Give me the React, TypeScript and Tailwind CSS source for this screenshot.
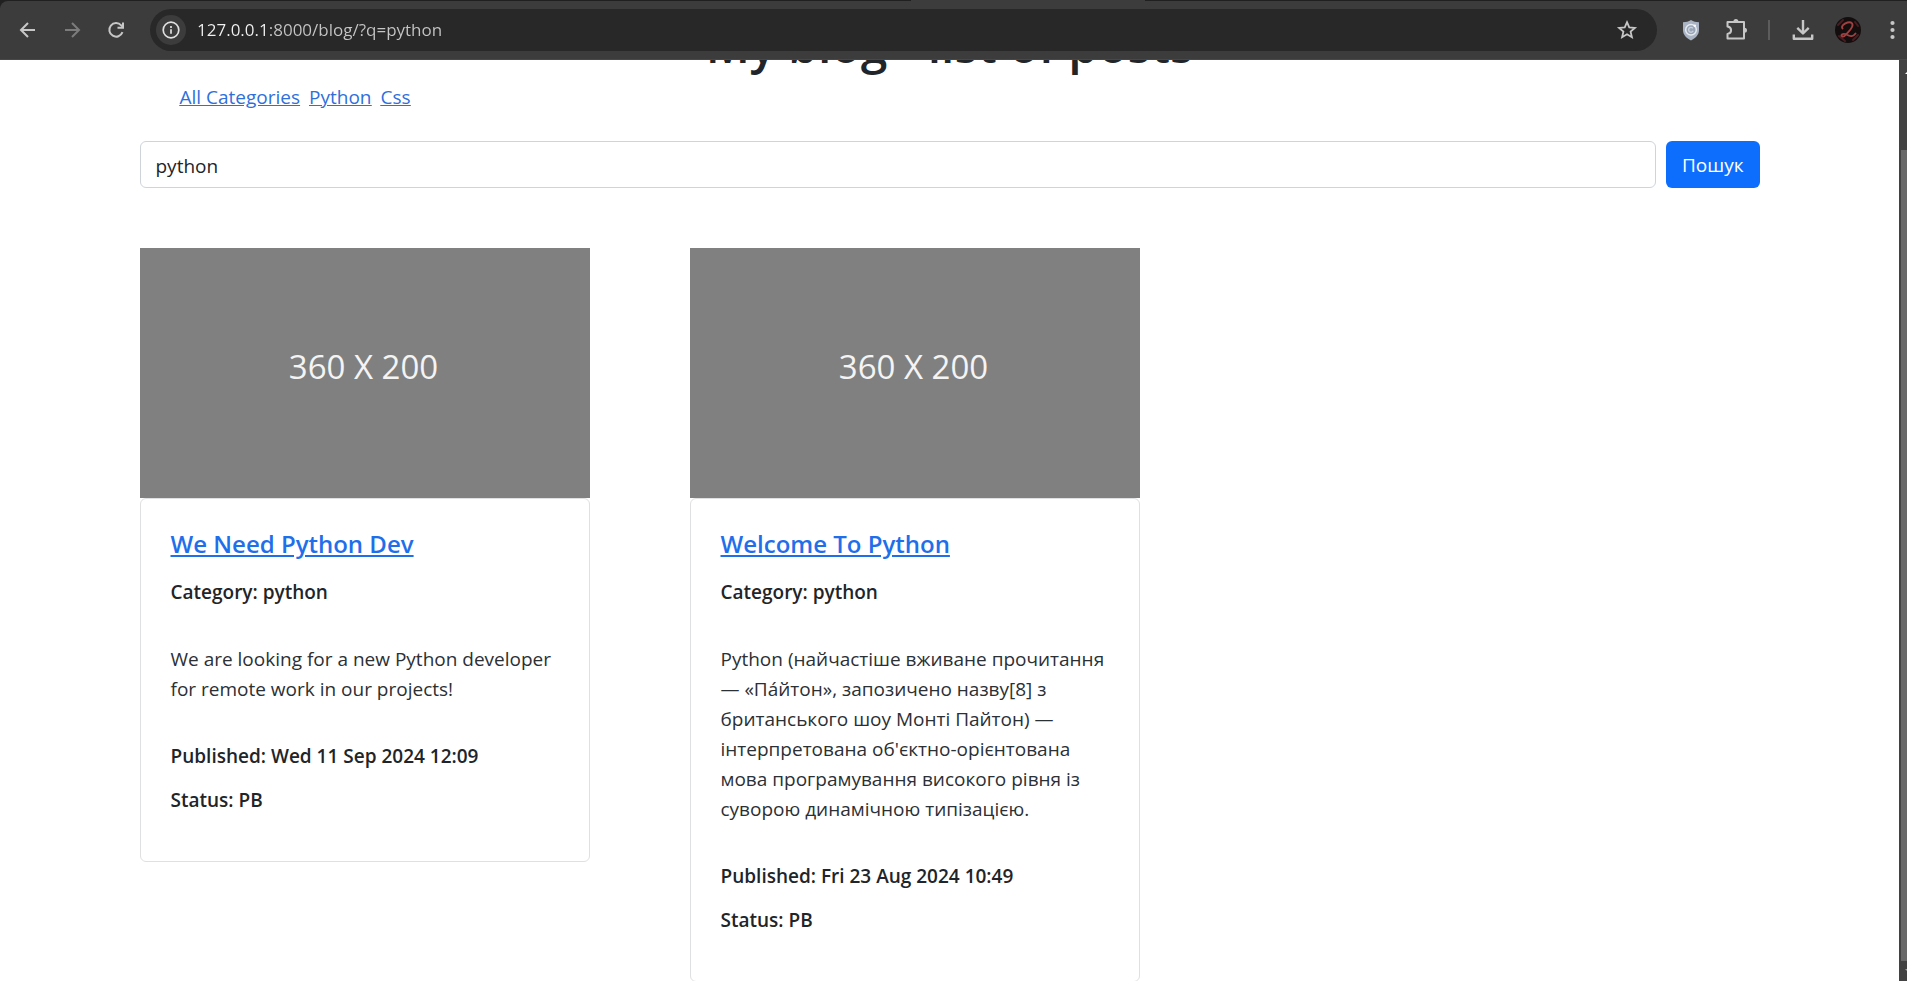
import React from "react";

type Post = {
  title: string;
  category: string;
  body: string;
  published: string;
  status: string;
};

const posts: Post[] = [
  {
    title: "We Need Python Dev",
    category: "python",
    body: "We are looking for a new Python developer for remote work in our projects!",
    published: "Wed 11 Sep 2024 12:09",
    status: "PB",
  },
  {
    title: "Welcome To Python",
    category: "python",
    body: "Python (найчастіше вживане прочитання — «Па́йтон», запозичено назву[8] з британського шоу Монті Пайтон) — інтерпретована об'єктно-орієнтована мова програмування високого рівня із суворою динамічною типізацією.",
    published: "Fri 23 Aug 2024 10:49",
    status: "PB",
  },
];

function ToolButton({ label, children }: { label: string; children: React.ReactNode }) {
  return (
    <button type="button" aria-label={label} className="flex size-6 shrink-0 items-center justify-center">
      {children}
    </button>
  );
}

function Toolbar() {
  return (
    <header className="relative z-10 flex h-[60px] shrink-0 flex-col bg-[#202020]">
      <div className="flex h-px justify-center pl-[148px]">
        <div className="w-[234px] bg-[#3c3c3c]" />
      </div>
      <div className="flex flex-1 items-center rounded-tl-lg border-b border-[#484848] bg-[#3c3c3c] pr-0.5 pl-4 text-[#c7c7c7]">
        <nav aria-label="History" className="flex gap-5">
          <ToolButton label="Back">
            <svg viewBox="0 0 24 24" className="size-6" fill="none" stroke="currentColor" strokeWidth="2">
              <path d="M19 12H5.500M12 5l-7 7 7 7" />
            </svg>
          </ToolButton>
          <ToolButton label="Forward">
            <svg viewBox="0 0 24 24" className="size-6 text-[#7c7c7c]" fill="none" stroke="currentColor" strokeWidth="2">
              <path d="M5 12h13.500M12 5l7 7-7 7" />
            </svg>
          </ToolButton>
          <ToolButton label="Reload">
            <svg viewBox="0 0 24 24" className="size-6" fill="none" stroke="currentColor" strokeWidth="2">
              <path d="M18.500 14.200A6.800 6.800 0 1 1 17.200 7.300L19 9.200" />
              <path d="M19 4.500v5.300h-5.500" />
            </svg>
          </ToolButton>
        </nav>
        <div className="ml-[22px] flex h-[42px] flex-1 items-center rounded-full bg-[#282828] pr-[18px] pl-1.5">
          <button
            type="button"
            aria-label="Site information"
            className="flex size-[30px] shrink-0 items-center justify-center rounded-full bg-[#3c3c3c] text-[#e0e0e0]"
          >
            <svg viewBox="0 0 20 20" className="size-5" fill="none" stroke="currentColor" strokeWidth="1.700">
              <circle cx="10" cy="10" r="7.800" />
              <path d="M10 9.300v4.500M10 6v1.900" />
            </svg>
          </button>
          <input
            aria-label="Address"
            defaultValue="127.0.0.1:8000/blog/?q=python"
            className="ml-[11px] min-w-0 flex-1 bg-[linear-gradient(90deg,#f2f2f2_72px,#c6c6c6_72px)] bg-clip-text text-[17px] text-transparent outline-none"
          />
          <ToolButton label="Bookmark">
            <svg viewBox="0 0 24 24" className="size-6" fill="none" stroke="currentColor" strokeWidth="1.800">
              <path d="M12 4.200l2.250 5.200 5.650.5-4.300 3.750 1.300 5.550L12 16.300l-4.900 2.900 1.300-5.550L4.100 9.900l5.650-.5z" />
            </svg>
          </ToolButton>
        </div>
        <div className="ml-[22px] flex items-center">
          <ToolButton label="Ad blocker">
            <svg viewBox="0 0 24 24" className="size-6">
              <path d="M12 2c2.500 1.600 5 2.100 8 2.200v7.800c0 5-3.500 8-8 10.500C7.500 20 4 17 4 12V4.200C7 4.100 9.500 3.600 12 2z" fill="#a9b3c3" />
              <circle cx="12" cy="11.800" r="5.300" fill="#98a4b6" stroke="#e6eaf0" strokeWidth="1.500" />
              <path d="M13.800 10.200a2.400 2.400 0 1 0 .4 2.600" fill="none" stroke="#c9d1dc" strokeWidth="1.400" />
              <circle cx="15.800" cy="7.800" r="1.300" fill="#f7f9fb" />
            </svg>
          </ToolButton>
          <div className="ml-[21px] flex">
            <ToolButton label="Extensions">
              <svg viewBox="0 0 24 24" className="size-6" fill="none" stroke="currentColor" strokeWidth="2">
                <path d="M3.500 4h16.500v16.500H3.500v-4.500c2.400-.4 3.600-1.900 3.600-3.700S5.900 9 3.500 8.600z" strokeLinejoin="round" />
                <path d="M9.400 3.500a2.500 2.500 0 0 1 5 0zM20.500 9.800a2.500 2.500 0 0 1 0 5z" fill="currentColor" stroke="none" />
              </svg>
            </ToolButton>
          </div>
          <div className="ml-5 h-5 w-0.5 bg-[#5c5c5c]" />
          <div className="ml-[21px] flex">
            <ToolButton label="Downloads">
              <svg viewBox="0 0 24 24" className="size-6" fill="none" stroke="currentColor" strokeWidth="2.400">
                <path d="M12 2v13M6.300 9.800l5.700 5.700 5.700-5.700M2.800 16.500v4.200h18.400v-4.200" strokeLinejoin="round" />
              </svg>
            </ToolButton>
          </div>
          <button type="button" aria-label="Profile" className="ml-5 size-[26px] shrink-0 overflow-hidden rounded-full bg-[#140d0e]">
            <svg viewBox="0 0 26 26" className="size-[26px]" fill="none" strokeLinecap="round">
              <path d="M3 8l5-5M18 23l5-5M4 19l6 5M20 5l3 4" stroke="#4a1c20" strokeWidth="2" />
              <path d="M7.500 11.500c-1.500-2 1-5 5-6s6 1 4.500 4.500-4.500 5.500-6.500 8-4.500 1.500-4 0 3.500-1.500 6 0 6 1.500 8-1.500" stroke="#a04040" strokeWidth="1.900" />
            </svg>
          </button>
          <div className="ml-5 flex">
            <ToolButton label="Menu">
              <svg viewBox="0 0 24 24" className="size-6" fill="currentColor">
                <circle cx="11.500" cy="5" r="2.100" />
                <circle cx="11.500" cy="12" r="2.100" />
                <circle cx="11.500" cy="19" r="2.100" />
              </svg>
            </ToolButton>
          </div>
        </div>
      </div>
    </header>
  );
}

function PostCard({ post }: { post: Post }) {
  return (
    <article className="w-[450px] max-w-full">
      <div className="flex h-[250px] items-center justify-center bg-[#808080] pr-0.5 pb-3 text-[33px] text-[#f4f4f4]">
        360 X 200
      </div>
      <div className="rounded-md border border-[#dee0e2] px-[30px] pt-[29px] pb-[49px] text-[19px]">
        <h2 className="mb-5 text-[24px] leading-8 font-semibold">
          <a href="#post" className="text-[#1f6feb] underline">{post.title}</a>
        </h2>
        <h3 className="leading-6 font-semibold">Category: {post.category}</h3>
        <p className="my-10 leading-[30px] text-[#2b3035]">{post.body}</p>
        <h3 className="mb-5 leading-6 font-semibold">Published: {post.published}</h3>
        <h3 className="leading-6 font-semibold">Status: {post.status}</h3>
      </div>
    </article>
  );
}

export default function App() {
  return (
    <div className="flex h-screen flex-col overflow-hidden bg-white font-['Open_Sans','Noto_Sans',sans-serif] text-[#212529]">
      <Toolbar />
      <div className="flex min-h-0 flex-1">
        <main className="min-w-0 flex-1 overflow-hidden">
          <div className="mx-auto max-w-[1650px] px-[15px]">
            <h1 className="-mt-[45px] mb-[7px] text-center text-[48px] leading-[60px] font-semibold">My blog - list of posts</h1>
            <nav aria-label="Categories" className="flex gap-[9px] pl-10 text-[19px] leading-[30px] text-[#2f6fdc] underline">
              <a href="#all">All Categories</a>
              <a href="#python">Python</a>
              <a href="#css">Css</a>
            </nav>
            <form className="mt-[29px] flex gap-2.5 text-[19px]" onSubmit={(e) => e.preventDefault()}>
              <input
                aria-label="Search posts"
                defaultValue="python"
                className="h-[47px] min-w-0 flex-1 rounded-md border border-[#ced4da] px-[15px] pt-0.5 outline-none"
              />
              <button type="submit" className="h-[47px] rounded-md bg-[#0d6efd] px-4 pt-0.5 text-white">
                Пошук
              </button>
            </form>
          </div>
          <section aria-label="Posts" className="mx-auto mt-[60px] grid max-w-[1650px] grid-cols-3 items-start">
            {posts.map((post) => (
              <div key={post.title} className="px-[15px]">
                <PostCard post={post} />
              </div>
            ))}
          </section>
        </main>
        <div aria-hidden="true" className="flex w-2 shrink-0 flex-col bg-[#424242]">
          <div className="flex h-[90px] justify-end pt-3">
            <svg viewBox="0 0 2 2" className="size-0.5" fill="#fff">
              <path d="M2 0v2H0z" />
            </svg>
          </div>
          <div className="ml-0.5 flex-1 bg-[#686868]" />
          <div className="flex h-5 justify-end pt-2">
            <svg viewBox="0 0 2 2" className="size-0.5" fill="#a0a0a0">
              <path d="M0 0h2v2z" />
            </svg>
          </div>
        </div>
      </div>
    </div>
  );
}
